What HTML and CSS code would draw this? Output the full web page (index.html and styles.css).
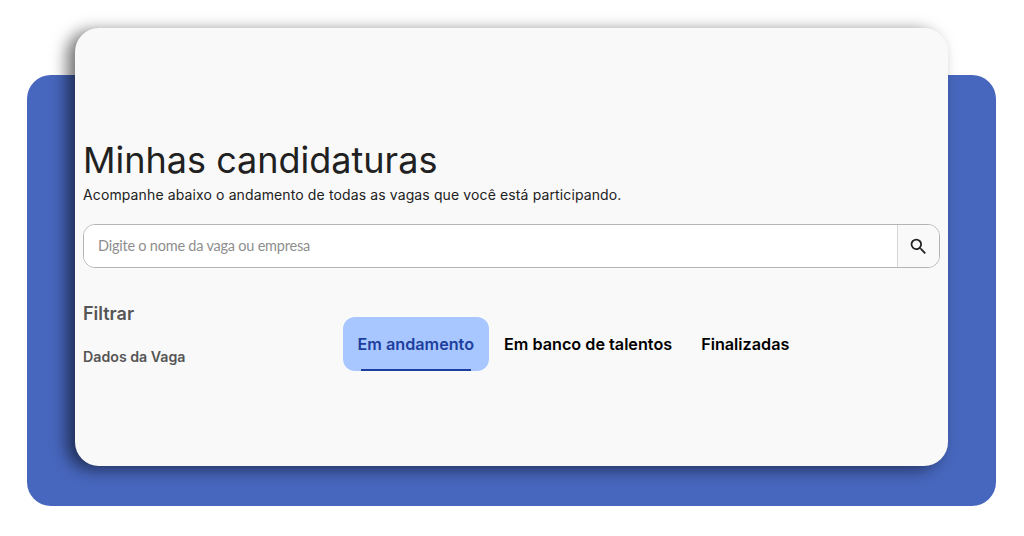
FILE: index.html
```html
<!DOCTYPE html>
<html lang="pt-BR">
<head>
  <meta charset="UTF-8">
  <meta name="viewport" content="width=device-width, initial-scale=1.0">
  <title>Minhas candidaturas</title>
  <link rel="stylesheet" href="styles.css">
</head>
<body>
  <div class="backdrop">
    <main class="card">
      <h1>Minhas candidaturas</h1>
      <p class="intro">Acompanhe abaixo o andamento de todas as vagas que você está participando.</p>

      <form class="search">
        <input type="text" placeholder="Digite o nome da vaga ou empresa">
        <button type="button" aria-label="Buscar">
          <svg width="21" height="21" viewBox="0 0 24 24" fill="#212121"><path d="M15.5 14h-.79l-.28-.27A6.47 6.47 0 0 0 16 9.5 6.5 6.5 0 1 0 9.5 16c1.61 0 3.09-.59 4.23-1.57l.27.28v.79l5 4.99L20.49 19l-4.99-5zm-6 0C7.01 14 5 11.99 5 9.5S7.01 5 9.5 5 14 7.01 14 9.5 11.99 14 9.5 14z"/></svg>
        </button>
      </form>

      <div class="content">
        <aside class="filters">
          <h2>Filtrar</h2>
          <h3>Dados da Vaga</h3>
        </aside>
        <nav class="tabs">
          <a class="tab active" href="#">Em andamento</a>
          <a class="tab" href="#">Em banco de talentos</a>
          <a class="tab" href="#">Finalizadas</a>
        </nav>
      </div>
    </main>
  </div>
</body>
</html>
```

FILE: styles.css
```css
html, body {
  height: 100%;
}
body {
  margin: 0;
  background-color: #fff;
  font-family: Inter, "Liberation Sans", sans-serif;
  overflow: hidden;
}
.backdrop {
  box-sizing: border-box;
  width: 969px;
  height: 431px;
  margin: 75px 0 0 27px;
  padding: 0 48px;
  background-color: #4766bd;
  border-radius: 24px;
}
.card {
  box-sizing: border-box;
  position: relative;
  top: -47px;
  width: 873px;
  height: 438px;
  padding: 112px 8px 0;
  background-color: #f9f9f9;
  border-radius: 24px;
  box-shadow: -8px 3px 16px rgba(0, 0, 0, 0.55);
}
h1 {
  margin: 0;
  font-size: 36px;
  font-weight: 400;
  line-height: 40px;
  color: #212121;
}
.intro {
  margin: 5px 0 0;
  font-size: 14px;
  letter-spacing: 0.12px;
  line-height: 20px;
  color: #212121;
}
.search {
  display: flex;
  height: 44px;
  margin-top: 19px;
  box-sizing: border-box;
  border: 1px solid #b4b4b4;
  border-radius: 12px;
  overflow: hidden;
}
.search input {
  flex: 1;
  padding: 0 14px 2px;
  border: none;
  outline: none;
  background-color: #fff;
  font-family: Lato, "Liberation Sans", sans-serif;
  font-size: 14.5px;
  letter-spacing: -0.22px;
}
.search input::placeholder {
  color: #8e8e8e;
  opacity: 1;
}
.search button {
  display: flex;
  align-items: center;
  justify-content: center;
  width: 42px;
  padding: 0;
  border: none;
  border-left: 1px solid #d6d6d6;
  background-color: #f9f9f9;
  cursor: pointer;
}
.content {
  display: flex;
  margin-top: 34px;
}
.filters {
  width: 260px;
  color: #555;
}
.filters h2 {
  margin: 0;
  font-size: 18px;
  font-weight: 600;
  line-height: 24px;
}
.filters h3 {
  margin: 21px 0 0;
  font-size: 14.2px;
  font-weight: 600;
  line-height: 20px;
}
.tabs {
  display: flex;
  margin-top: 15px;
}
.tab {
  position: relative;
  display: flex;
  align-items: center;
  height: 54px;
  padding: 0 14.5px;
  border-radius: 12px;
  font-size: 16.2px;
  font-weight: 600;
  color: #000;
  text-decoration: none;
}
.tab.active {
  margin-right: 1px;
  background-color: #a8c6ff;
  color: #1d3f9e;
}
.tab.active::after {
  content: "";
  position: absolute;
  left: 18px;
  right: 18px;
  bottom: 0;
  height: 2px;
  background-color: #1d3f9e;
}
```
